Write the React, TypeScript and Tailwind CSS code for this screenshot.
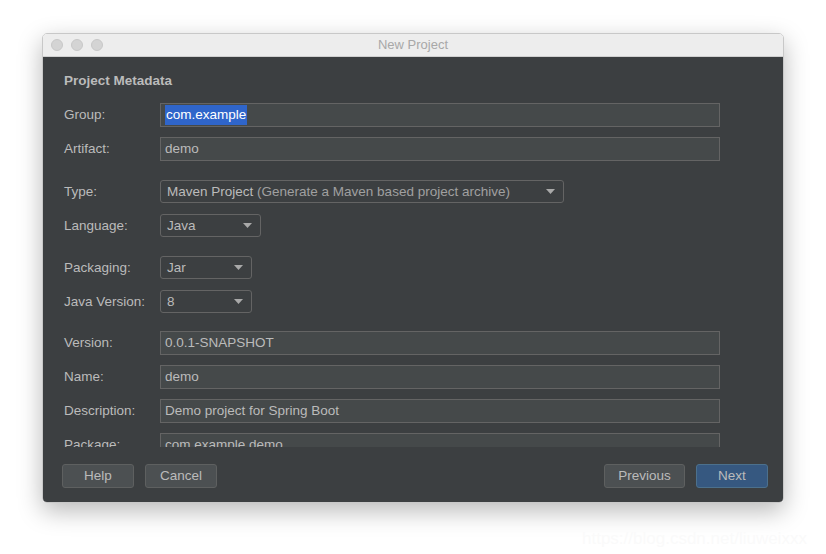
import React from 'react';

const FONT = { fontFamily: '"Liberation Sans", Arial, sans-serif' };

function Caret() {
  return (
    <svg width="9" height="5" viewBox="0 0 9 5" className="shrink-0">
      <path d="M0 0 L9 0 L4.5 5 Z" fill="#a9a9a9" />
    </svg>
  );
}

function Row({ label, top, children }: { label: string; top: string; children: React.ReactNode }) {
  return (
    <div className={`flex items-center ${top}`}>
      <div className="w-[96px] shrink-0 text-[13.5px] text-[#bbbbbb]">{label}</div>
      {children}
    </div>
  );
}

function Field({ value, selected }: { value: string; selected?: boolean }) {
  return (
    <div className="w-[560px] h-[24px] border border-[#646464] bg-[#45494a] flex items-center px-[4px] text-[13.5px] text-[#bbbbbb]">
      {selected ? <span className="bg-[#2f65ca] text-white px-[1px]">{value}</span> : <span>{value}</span>}
    </div>
  );
}

function Combo({ width, children }: { width: string; children: React.ReactNode }) {
  return (
    <div className={`${width} h-[23px] border border-[#646464] rounded-[3px] bg-[#3c3f41] flex items-center justify-between pl-[6px] pr-[8px] text-[13.5px] text-[#bbbbbb]`}>
      <span className="whitespace-nowrap">{children}</span>
      <Caret />
    </div>
  );
}

function Btn({ label, width, primary }: { label: string; width: string; primary?: boolean }) {
  return (
    <div
      className={`${width} h-[24px] rounded-[3px] border flex items-center justify-center text-[13.5px] ${
        primary ? 'bg-[#365880] border-[#4c708c] text-[#bbbbbb]' : 'bg-[#4c5052] border-[#5e6060] text-[#bbbbbb]'
      }`}
    >
      {label}
    </div>
  );
}

export default function App() {
  return (
    <div className="w-[826px] h-[554px] bg-white overflow-hidden relative" style={FONT}>
      <div className="ml-[42px] mt-[33px] w-[742px] h-[470px] rounded-[5px] overflow-hidden flex flex-col shadow-[0_8px_24px_rgba(0,0,0,0.28)] border border-[#c8c8c8]">
        {/* title bar */}
        <div className="h-[23px] bg-[#ededed] border-b border-[#d0d0d0] flex items-center relative shrink-0">
          <div className="flex gap-[8px] pl-[8px]">
            <span className="w-[12px] h-[12px] rounded-full bg-[#d4d4d4] border border-[#c8c8c8]" />
            <span className="w-[12px] h-[12px] rounded-full bg-[#d4d4d4] border border-[#c8c8c8]" />
            <span className="w-[12px] h-[12px] rounded-full bg-[#d4d4d4] border border-[#c8c8c8]" />
          </div>
          <div className="absolute inset-0 flex items-center justify-center text-[13px] text-[#a8a8a8]">New Project</div>
        </div>

        {/* body */}
        <div className="flex-1 bg-[#3c3f41] flex flex-col">
          <div className="h-[390px] overflow-hidden pl-[21px]">
            <div className="pt-[14px] text-[13.5px] font-bold text-[#bbbbbb]">Project Metadata</div>
            <Row label="Group:" top="mt-[12px]"><Field value="com.example" selected /></Row>
            <Row label="Artifact:" top="mt-[10px]"><Field value="demo" /></Row>
            <Row label="Type:" top="mt-[19px]">
              <Combo width="w-[404px]">
                Maven Project <span className="text-[#a0a0a0]">(Generate a Maven based project archive)</span>
              </Combo>
            </Row>
            <Row label="Language:" top="mt-[11px]"><Combo width="w-[101px]">Java</Combo></Row>
            <Row label="Packaging:" top="mt-[19px]"><Combo width="w-[92px]">Jar</Combo></Row>
            <Row label="Java Version:" top="mt-[11px]"><Combo width="w-[92px]">8</Combo></Row>
            <Row label="Version:" top="mt-[18px]"><Field value="0.0.1-SNAPSHOT" /></Row>
            <Row label="Name:" top="mt-[10px]"><Field value="demo" /></Row>
            <Row label="Description:" top="mt-[10px]"><Field value="Demo project for Spring Boot" /></Row>
            <Row label="Package:" top="mt-[10px]"><Field value="com.example.demo" /></Row>
          </div>
          <div className="flex items-center pl-[19px] pr-[15px] pt-[17px]">
            <Btn label="Help" width="w-[72px]" />
            <div className="ml-[11px]"><Btn label="Cancel" width="w-[72px]" /></div>
            <div className="ml-auto"><Btn label="Previous" width="w-[81px]" /></div>
            <div className="ml-[11px]"><Btn label="Next" width="w-[72px]" primary /></div>
          </div>
        </div>
      </div>
      <div className="absolute left-[582px] top-[526px] text-[17px] text-[#fafafa]">https://blog.csdn.net/liuweixxx</div>
    </div>
  );
}
